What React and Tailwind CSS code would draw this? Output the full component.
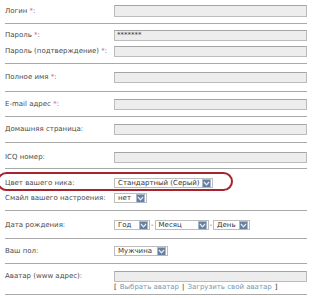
import React from "react";

const Req = () => <span className="text-[#d4667a]">*</span>;

const Arrow = () => (
  <span className="flex h-[9px] w-[9px] shrink-0 items-center justify-center border border-[#a9b8cc] bg-[#6880a0]">
    <svg width="7" height="5" viewBox="0 0 7 5">
      <path d="M1 1 L3.5 3.8 L6 1" fill="none" stroke="#e8eef6" strokeWidth="1.2" />
    </svg>
  </span>
);

const Select = ({ text, width }) => (
  <div
    className={`flex h-[10px] items-center justify-between border border-[#bdbdbd] bg-white pl-[3px] pr-[1px] text-[#333] ${width}`}
  >
    <span className="leading-none">{text}</span>
    <Arrow />
  </div>
);

const Input = ({ value, h = "h-[11px]" }) => (
  <div
    className={`flex w-[193px] items-center border border-[#bcbcbc] border-t-[#a4a4a4] bg-[#ededed] pl-[2px] text-[#333] leading-none ${h}`}
  >
    {value}
  </div>
);

const Row = ({ label, children, h = "h-[11px]" }) => (
  <div className={`flex items-center ${h}`}>
    <div className="w-[109px] shrink-0 text-[#4a4a4a] leading-none">{label}</div>
    {children}
  </div>
);

const Group = ({ pt, pb, gap = "", children }) => (
  <div className={`flex flex-col border-b border-[#a9a9a9] ${pt} ${pb} ${gap}`}>
    {children}
  </div>
);

export default function App() {
  return (
    <div
      className="relative h-[298px] w-[315px] overflow-hidden bg-white pl-[5px] pr-[8px] text-[7px]"
      style={{ fontFamily: '"DejaVu Sans", Verdana, sans-serif' }}
    >
      <Group pt="pt-[5px]" pb="pb-[6px]">
        <Row label={<>Логин <Req />:</>} h="h-[12px]">
          <Input h="h-[12px]" />
        </Row>
      </Group>
      <Group pt="pt-[6px]" pb="pb-[6px]" gap="gap-[5px]">
        <Row label={<>Пароль <Req />:</>}>
          <Input value="*******" />
        </Row>
        <Row label={<>Пароль (подтверждение) <Req />:</>}>
          <Input />
        </Row>
      </Group>
      <Group pt="pt-[8px]" pb="pb-[8px]">
        <Row label={<>Полное имя <Req />:</>}>
          <Input />
        </Row>
      </Group>
      <Group pt="pt-[7px]" pb="pb-[6px]">
        <Row label={<>E-mail адрес <Req />:</>}>
          <Input />
        </Row>
      </Group>
      <Group pt="pt-[7px]" pb="pb-[7px]">
        <Row label="Домашняя страница:">
          <Input />
        </Row>
      </Group>
      <Group pt="pt-[9px]" pb="pb-[5px]">
        <Row label="ICQ номер:">
          <Input />
        </Row>
      </Group>
      <Group pt="pt-[9px]" pb="pb-[7px]" gap="gap-[5px]">
        <Row label="Цвет вашего ника:" h="h-[10px]">
          <Select text="Стандартный (Серый)" width="w-[99px]" />
        </Row>
        <Row label="Смайл вашего настроения:" h="h-[10px]">
          <Select text="нет" width="w-[33px]" />
        </Row>
      </Group>
      <Group pt="pt-[9px]" pb="pb-[8px]">
        <Row label="Дата рождения:" h="h-[10px]">
          <div className="flex items-center gap-[1px] text-[#555]">
            <Select text="Год" width="w-[36px]" />
            <span className="leading-none">-</span>
            <Select text="Месяц" width="w-[54px]" />
            <span className="leading-none">-</span>
            <Select text="День" width="w-[37px]" />
          </div>
        </Row>
      </Group>
      <Group pt="pt-[7px]" pb="pb-[7px]">
        <Row label="Ваш пол:" h="h-[10px]">
          <Select text="Мужчина" width="w-[54px]" />
        </Row>
      </Group>
      <Group pt="pt-[7px]" pb="pb-[1px]">
        <Row label="Аватар (www адрес):">
          <Input />
        </Row>
        <div className="flex h-[11px] items-center pl-[109px] leading-none text-[#333]">
          <span>[</span>
          <span className="ml-[3px] text-[#7397b0]">Выбрать аватар</span>
          <span className="mx-[3px]">|</span>
          <span className="text-[#7397b0]">Загрузить свой аватар</span>
          <span className="ml-[3px]">]</span>
        </div>
      </Group>

      <div className="absolute left-[-3px] top-[172px] h-[19px] w-[236px] rounded-full border-2 border-[#a9232e]" />
    </div>
  );
}
